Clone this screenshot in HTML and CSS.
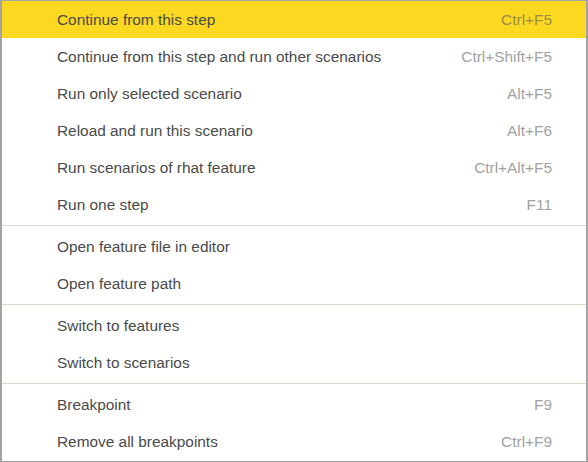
FILE: index.html
```html
<!DOCTYPE html>
<html lang="en">
<head>
    <meta charset="UTF-8">
    <meta name="viewport" content="width=device-width, initial-scale=1.0">
    <title>Context Menu</title>
    <link rel="stylesheet" href="styles.css">
</head>
<body>
    <ul class="menu">
        <li class="menu-item active"><span>Continue from this step</span><span class="shortcut">Ctrl+F5</span></li>
        <li class="menu-item"><span>Continue from this step and run other scenarios</span><span class="shortcut">Ctrl+Shift+F5</span></li>
        <li class="menu-item"><span>Run only selected scenario</span><span class="shortcut">Alt+F5</span></li>
        <li class="menu-item"><span>Reload and run this scenario</span><span class="shortcut">Alt+F6</span></li>
        <li class="menu-item"><span>Run scenarios of rhat feature</span><span class="shortcut">Ctrl+Alt+F5</span></li>
        <li class="menu-item"><span>Run one step</span><span class="shortcut">F11</span></li>
        <li class="separator"></li>
        <li class="menu-item"><span>Open feature file in editor</span></li>
        <li class="menu-item"><span>Open feature path</span></li>
        <li class="separator"></li>
        <li class="menu-item"><span>Switch to features</span></li>
        <li class="menu-item"><span>Switch to scenarios</span></li>
        <li class="separator"></li>
        <li class="menu-item"><span>Breakpoint</span><span class="shortcut">F9</span></li>
        <li class="menu-item"><span>Remove all breakpoints</span><span class="shortcut">Ctrl+F9</span></li>
    </ul>
</body>
</html>
```

FILE: styles.css
```css
body {
    margin: 0;
    background: #fff;
    font-family: "Liberation Sans", Arial, sans-serif;
}
.menu {
    list-style: none;
    margin: 0;
    padding: 0;
    width: 588px;
    height: 462px;
    box-sizing: border-box;
    border: 1px solid #a3a3a3;
    border-left-width: 2px;
    border-right-width: 2px;
    background: #fff;
}
.menu-item {
    display: flex;
    justify-content: space-between;
    align-items: center;
    height: 37px;
    padding: 0 34px 0 55px;
    font-size: 15.4px;
    color: #4a4a4a;
}
.menu-item.active {
    background-color: #fcd920;
}
.shortcut {
    color: #a2a2a2;
}
.menu-item.active .shortcut {
    color: #9b8c4a;
}
.separator {
    height: 1px;
    margin: 2px 0;
    background: #dcd9cc;
}
```
